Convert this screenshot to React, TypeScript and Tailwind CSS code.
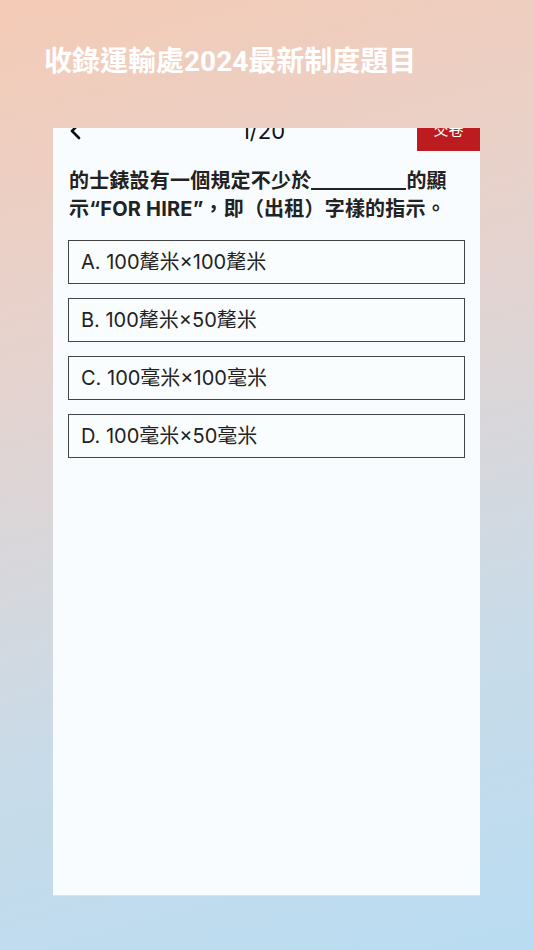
import React from "react";

const options = [
  "A. 100氂米×100氂米",
  "B. 100氂米×50氂米",
  "C. 100毫米×100毫米",
  "D. 100毫米×50毫米",
];

export default function App() {
  return (
    <div
      className="w-[534px] h-[950px] overflow-hidden flex flex-col bg-[linear-gradient(165deg,#f4cbb6_0%,#e5d3cf_35%,#c9dbe8_70%,#b9dcf2_100%)]"
      style={{ fontFamily: 'Inter, "Noto Sans CJK TC", "Noto Sans", sans-serif' }}
    >
      <div className="pl-[44px] pt-[42px] h-[128px]">
        <h1
          className="text-white font-bold text-[28px] leading-[40px]"
          style={{ fontFamily: 'Roboto, "Noto Sans CJK TC", sans-serif' }}
        >
          收錄運輸處2024最新制度題目
        </h1>
      </div>
      <div className="ml-[53px] w-[427px] h-[768px] bg-[#f8fcfe] overflow-hidden flex flex-col border-b border-[#d6e6f0]">
        <div className="mt-[-23px] h-[46px] flex items-center relative shrink-0">
          <div className="pl-[16px] w-[60px] flex items-center pt-[6px]">
            <svg width="14" height="18" viewBox="0 0 14 18" fill="none">
              <path d="M10 2 L3 9 L10 16" stroke="#111" strokeWidth="2.6" strokeLinecap="round" strokeLinejoin="round" />
            </svg>
          </div>
          <div className="flex-1 text-center text-[22px] text-[#111] pt-[6px] pr-[4px]">1/20</div>
          <div className="w-[63px] h-[46px] bg-[#bc1c1f] text-white text-[15px] flex items-center justify-center pt-[4px]">
            交卷
          </div>
        </div>
        <div className="px-[16px] pt-[16px] text-[20px] leading-[28px] font-bold text-[#222] tracking-[0.2px]">
          的士錶設有一個規定不少於
          <span className="inline-block w-[95px] border-b-2 border-[#222] align-baseline translate-y-[2px]"></span>
          的顯示“FOR HIRE”，即（出租）字樣的指示。
        </div>
        <div className="px-[15px] pt-[17px] flex flex-col gap-[14px]">
          {options.map((o) => (
            <div
              key={o}
              className="h-[44px] border border-[#444] bg-[#fafdfe] flex items-center pl-[12px] text-[20px] text-[#222]"
            >
              {o}
            </div>
          ))}
        </div>
      </div>
    </div>
  );
}
